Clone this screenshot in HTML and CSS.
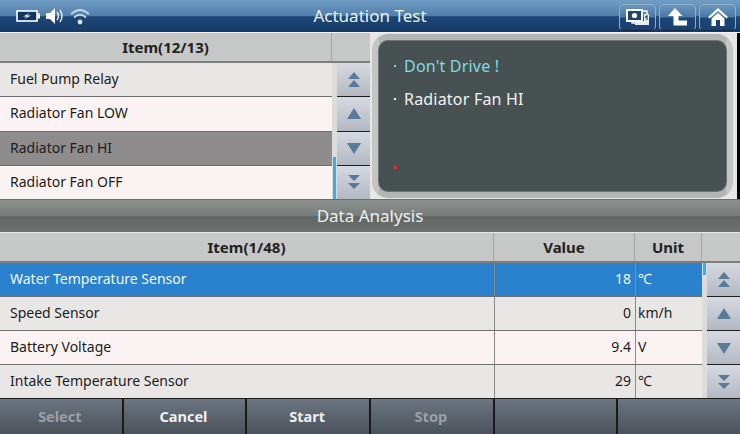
FILE: index.html
```html
<!DOCTYPE html>
<html lang="en">
<head>
  <meta charset="UTF-8">
  <title>Actuation Test</title>
  <link rel="stylesheet" href="styles.css">
</head>
<body>
  <header class="topbar">
    <div class="status-icons">
      <svg width="25" height="12" viewBox="0 0 25 12"><rect x="1" y="1" width="20" height="10" fill="#12355f" stroke="#fff" stroke-width="1.6"/><rect x="21.5" y="3.5" width="2.5" height="5" fill="#fff"/><path d="M14 3 L7 6.5 H11 L8 9 L15 5.6 H11 Z" fill="#fff"/></svg>
      <svg width="21" height="18" viewBox="0 0 21 18"><path d="M1 6 H5 L10 1 V17 L5 12 H1 Z" fill="#fff"/><path d="M12 5 Q15 9 12 13 M15 3 Q19 9 15 15" fill="none" stroke="#dfe8f0" stroke-width="1.5"/></svg>
      <svg width="20" height="17" viewBox="0 0 20 17"><path d="M1 6 Q10 -2 19 6 M4 9.5 Q10 4 16 9.5" fill="none" stroke="#c6d6e4" stroke-width="1.8"/><circle cx="10" cy="14" r="2.4" fill="#dce6ee"/></svg>
    </div>
    <div class="topbar-title">Actuation Test</div>
    <div class="top-buttons">
      <button class="top-btn"><svg width="24" height="18" viewBox="0 0 24 18"><path d="M6 3 H21 V15 H6 Z" fill="none" stroke="#fff" stroke-width="1.4"/><path d="M18 6 H23 V17 H9 V13 H18 Z" fill="#e6ebf0"/><path d="M19 9.5 L21 8 V12" fill="none" stroke="#254a75" stroke-width="1.2"/><rect x="1" y="2" width="15" height="11" fill="#1d4676" stroke="#fff" stroke-width="2"/><circle cx="8.5" cy="7.5" r="2.6" fill="#fff"/></svg></button>
      <button class="top-btn"><svg width="20" height="18" viewBox="0 0 20 18"><path d="M7 0 L14.5 8 H10.5 V12.5 H19 V17.5 H5.5 V8 H0 Z" fill="#fff"/></svg></button>
      <button class="top-btn"><svg width="20" height="18" viewBox="0 0 20 18"><path d="M10 0 L20 9 L18.5 10.5 L10 3 L1.5 10.5 L0 9 Z" fill="#fff"/><path d="M3.5 10.5 L10 5 L16.5 10.5 V18 H12 V12 H8 V18 H3.5 Z" fill="#fff"/></svg></button>
    </div>
  </header>

  <section class="upper">
    <div class="list-pane">
      <div class="head-row">
        <div class="head-cell grow">Item(12/13)</div>
        <div class="head-cell scroll-head"></div>
      </div>
      <div class="body-row">
        <div class="rows">
          <div class="row odd"><span class="cell grow">Fuel Pump Relay</span></div>
          <div class="row even"><span class="cell grow">Radiator Fan LOW</span></div>
          <div class="row picked"><span class="cell grow">Radiator Fan HI</span></div>
          <div class="row even"><span class="cell grow">Radiator Fan OFF</span></div>
        </div>
        <div class="scroll-track"><div class="thumb thumb-low"></div></div>
        <div class="scroll-btns">
          <button class="scroll-btn"><svg width="16" height="18" viewBox="0 0 16 18"><path d="M8 1 L14 8 H2 Z M8 9 L14 16 H2 Z" fill="#5a7a9a"/></svg></button>
          <button class="scroll-btn"><svg width="16" height="18" viewBox="0 0 16 18"><path d="M8 3 L15 14 H1 Z" fill="#5a7a9a"/></svg></button>
          <button class="scroll-btn"><svg width="16" height="18" viewBox="0 0 16 18"><path d="M8 15 L15 4 H1 Z" fill="#5a7a9a"/></svg></button>
          <button class="scroll-btn"><svg width="16" height="18" viewBox="0 0 16 18"><path d="M2 2 H14 L8 8 Z M2 10 H14 L8 16 Z" fill="#5a7a9a"/></svg></button>
        </div>
      </div>
    </div>
    <div class="message-wrap">
      <div class="message">
        <p class="msg warn">Don't Drive !</p>
        <p class="msg">Radiator Fan HI</p>
        <i class="red-dot"></i>
      </div>
    </div>
  </section>

  <div class="section-bar">Data Analysis</div>

  <section class="lower">
    <div class="head-row">
      <div class="head-cell grow">Item(1/48)</div>
      <div class="head-cell col-value">Value</div>
      <div class="head-cell col-unit">Unit</div>
      <div class="head-cell scroll-head"></div>
    </div>
    <div class="body-row">
      <div class="rows">
        <div class="row active"><span class="cell grow">Water Temperature Sensor</span><span class="cell col-value num">18</span><span class="cell col-unit">℃</span></div>
        <div class="row odd"><span class="cell grow">Speed Sensor</span><span class="cell col-value num">0</span><span class="cell col-unit">km/h</span></div>
        <div class="row even"><span class="cell grow">Battery Voltage</span><span class="cell col-value num">9.4</span><span class="cell col-unit">V</span></div>
        <div class="row odd"><span class="cell grow">Intake Temperature Sensor</span><span class="cell col-value num">29</span><span class="cell col-unit">℃</span></div>
      </div>
      <div class="scroll-track"><div class="thumb thumb-high"></div></div>
      <div class="scroll-btns">
        <button class="scroll-btn"><svg width="16" height="18" viewBox="0 0 16 18"><path d="M8 1 L14 8 H2 Z M8 9 L14 16 H2 Z" fill="#5a7a9a"/></svg></button>
        <button class="scroll-btn"><svg width="16" height="18" viewBox="0 0 16 18"><path d="M8 3 L15 14 H1 Z" fill="#5a7a9a"/></svg></button>
        <button class="scroll-btn"><svg width="16" height="18" viewBox="0 0 16 18"><path d="M8 15 L15 4 H1 Z" fill="#5a7a9a"/></svg></button>
        <button class="scroll-btn"><svg width="16" height="18" viewBox="0 0 16 18"><path d="M2 2 H14 L8 8 Z M2 10 H14 L8 16 Z" fill="#5a7a9a"/></svg></button>
      </div>
    </div>
  </section>

  <footer class="bottombar">
    <button class="foot-btn off">Select</button>
    <button class="foot-btn">Cancel</button>
    <button class="foot-btn">Start</button>
    <button class="foot-btn off">Stop</button>
    <button class="foot-btn"></button>
    <button class="foot-btn"></button>
  </footer>
</body>
</html>
```

FILE: styles.css
```css
* {
  margin: 0;
  padding: 0;
  box-sizing: border-box;
}

html, body {
  width: 740px;
  height: 434px;
  overflow: hidden;
}

body {
  display: flex;
  flex-direction: column;
  font-family: "Noto Sans", "DejaVu Sans", sans-serif;
  font-size: 14px;
  color: #1c1c1c;
  background: #f6f2f2;
}

button {
  font-family: inherit;
  border: none;
}

/* top bar */
.topbar {
  height: 32px;
  flex: none;
  display: grid;
  grid-template-columns: 1fr auto 1fr;
  align-items: center;
  background: linear-gradient(#6f9dc5 0, #4f7ea9 50%, #1e4877 52%, #153a66 100%);
}

.status-icons {
  display: flex;
  align-items: center;
  gap: 4px;
  padding-left: 16px;
}

.topbar-title {
  color: #eef3f7;
  font-size: 17px;
  padding-bottom: 1px;
}

.top-buttons {
  display: flex;
  justify-content: flex-end;
  gap: 3px;
  padding: 2px 4px 0 0;
}

.top-btn {
  width: 37px;
  height: 27px;
  display: flex;
  align-items: center;
  justify-content: center;
  border: 1px solid #8fb0cd;
  border-bottom-color: #10294a;
  border-radius: 5px;
  background: linear-gradient(#6a96bd 0, #4a78a3 48%, #1d4676 52%, #1a4070 100%);
}

/* upper part */
.upper {
  height: 167px;
  flex: none;
  display: flex;
  border-top: 1px solid #f2f2f2;
}

.list-pane {
  width: 370px;
  display: flex;
  flex-direction: column;
}

.head-row {
  height: 30px;
  flex: none;
  display: flex;
  background: #c5c8c6;
  border-bottom: 2px solid #7d7d7d;
}

.head-cell {
  display: flex;
  align-items: center;
  justify-content: center;
  font-weight: 700;
  font-size: 15px;
  color: #222;
  border-right: 1px solid #a4a6a5;
}

.head-cell:last-child {
  border-right: none;
}

.grow {
  flex: 1;
  min-width: 0;
}

.scroll-head {
  width: 38px;
}

.body-row {
  flex: 1;
  display: flex;
  min-height: 0;
}

.rows {
  flex: 1;
  display: flex;
  flex-direction: column;
  min-width: 0;
}

.row {
  flex: 1;
  display: flex;
  align-items: center;
  border-bottom: 1px solid #6f6f6f;
}

.row:last-child {
  border-bottom: none;
}

.odd {
  background: #e9e6e6;
}

.even {
  background: #fbf3f3;
}

.picked {
  background: #8f8c8e;
}

.active {
  background: #2a82cf;
  color: #f2f6fa;
}

.cell {
  padding: 0 10px 2px;
  height: 100%;
  display: flex;
  align-items: center;
}

.scroll-track {
  width: 5px;
  flex: none;
  background: #dcdcdc;
  position: relative;
}

.thumb {
  position: absolute;
  left: 1px;
  width: 3px;
  background: #3aaee0;
}

.thumb-low {
  bottom: 0;
  height: 42px;
}

.thumb-high {
  top: 0;
  height: 12px;
}

.scroll-btns {
  width: 33px;
  flex: none;
  display: flex;
  flex-direction: column;
  gap: 1px;
  background: #1e1e1e;
}

.scroll-btn {
  flex: 1;
  display: flex;
  align-items: center;
  justify-content: center;
  background: linear-gradient(#d6d9e0, #b3b8c3);
}

/* message panel */
.message-wrap {
  flex: 1;
  background: #e6e6e6;
  border-right: 3px solid #000;
}

.message {
  height: 164px;
  margin: 1px 4px 0 2px;
  padding: 16px 0 0 26px;
  position: relative;
  background: #475151;
  border: 6px solid #c4c6c6;
  border-top-color: #b4b6b6;
  border-bottom-color: #b4b6b6;
  border-radius: 16px;
  box-shadow: inset 0 0 0 1px #6f7474;
  color: #f1f3f3;
  font-size: 16px;
}

.msg {
  line-height: 20px;
  margin-bottom: 13px;
  position: relative;
  letter-spacing: .2px;
}

.msg::before {
  content: "";
  position: absolute;
  left: -10px;
  top: 9px;
  width: 2px;
  height: 2px;
  background: currentColor;
}

.warn {
  color: #7fdde6;
}

.red-dot {
  position: absolute;
  left: 16px;
  top: 126px;
  width: 3px;
  height: 3px;
  background: #c2344f;
}

/* data analysis */
.section-bar {
  height: 33px;
  flex: none;
  display: flex;
  align-items: center;
  justify-content: center;
  color: #eef0ef;
  font-size: 17px;
  padding-bottom: 1px;
  background: linear-gradient(#8d9190 0, #777b7a 50%, #606564 52%, #6e7271 100%);
  border-top: 1px solid #6d6d6d;
}

.lower {
  height: 166px;
  flex: none;
  display: flex;
  flex-direction: column;
  border-top: 1px solid #e8e8e8;
}

.col-value {
  width: 141px;
  flex: none;
}

.col-unit {
  width: 67px;
  flex: none;
}

.lower .head-cell.col-unit {
  border-right: 1px solid #a4a6a5;
}

.lower .cell + .cell {
  border-left: 1px solid #8a8a8a;
}

.num {
  justify-content: flex-end;
  padding-right: 4px;
}

.cell.col-unit {
  padding-left: 2px;
}

/* bottom buttons */
.bottombar {
  flex: 1;
  display: flex;
  background: #1a1a1a;
  padding-top: 1px;
  gap: 2px;
}

.foot-btn {
  flex: 1;
  color: #f0f0f0;
  font-weight: 700;
  font-size: 14.5px;
  padding: 0 2px 2px 0;
  background: linear-gradient(#6d7682 0, #5b636e 50%, #4b525c 100%);
}

.off {
  color: #9ba0a6;
}
```
